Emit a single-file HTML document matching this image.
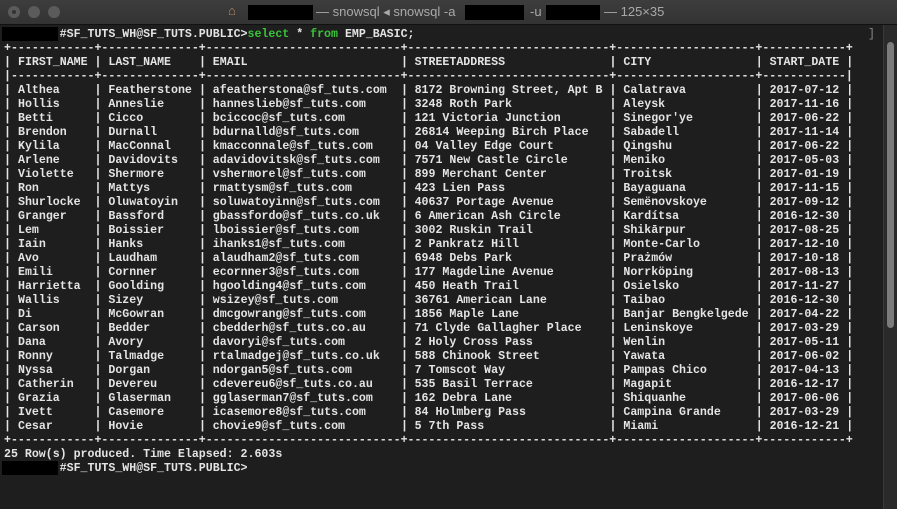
<!DOCTYPE html>
<html><head><meta charset="utf-8"><style>
*{margin:0;padding:0}
body{width:897px;height:509px;background:#1e1e1e;overflow:hidden;position:relative;font-family:"Liberation Mono",monospace}
.tb{position:absolute;left:0;top:0;width:897px;height:24px;background:linear-gradient(#3d3d3d,#333);border-bottom:1px solid #111}
.dot{position:absolute;top:6px;width:12px;height:12px;border-radius:50%;background:#5b5b5b}
.tt{position:absolute;top:4px;font:13px "Liberation Sans",sans-serif;color:#a9a9a9;white-space:pre}
.bx{position:absolute;background:#000}
.t{position:absolute;white-space:pre;font-size:11.6px;line-height:14px;font-weight:bold;color:#e4e4e4}
.g{color:#3ac23a}
.sb{position:absolute;left:883px;top:25px;width:14px;height:484px;background:#2a2a2a;border-left:1px solid #3a3a3a}
.th{position:absolute;left:887px;top:42px;width:7px;height:286px;border-radius:4px;background:#7b7b7b}
</style></head><body>
<div class="tb">
<div class="dot" style="left:8px"></div><div style="position:absolute;left:12px;top:10px;width:4px;height:4px;border-radius:50%;background:#333"></div>
<div class="dot" style="left:28px"></div><div class="dot" style="left:48px"></div>
<div class="tt" style="left:228px;top:3px;color:#b08a60">⌂</div>
<div class="bx" style="left:248px;top:5px;width:65px;height:15px"></div>
<div class="tt" style="left:316px">— snowsql ◂ snowsql -a</div>
<div class="bx" style="left:465px;top:5px;width:59px;height:15px"></div>
<div class="tt" style="left:530px">-u</div>
<div class="bx" style="left:546px;top:5px;width:54px;height:15px"></div>
<div class="tt" style="left:604px">— 125×35</div>
</div>
<div class="sb"></div><div class="th"></div>
<div class="t" style="left:868px;top:28px;color:#888;font-weight:normal">]</div>
<div class="bx" style="left:2px;top:27px;width:56px;height:14px"></div>
<div class="bx" style="left:2px;top:461px;width:56px;height:14px"></div>
<div class="t" style="left:4px;top:28px">        #SF_TUTS_WH@SF_TUTS.PUBLIC&gt;<span class="g">select</span> * <span class="g">from</span> EMP_BASIC;
+------------+--------------+----------------------------+-----------------------------+--------------------+------------+



























+------------+--------------+----------------------------+-----------------------------+--------------------+------------+
25 Row(s) produced. Time Elapsed: 2.603s
        #SF_TUTS_WH@SF_TUTS.PUBLIC&gt;</div>
<div class="t" style="left:4px;top:70px">|------------+--------------+----------------------------+-----------------------------+--------------------+------------|</div>
<div class="t" style="left:4px;top:56px">|
 
|
|
|
|
|
|
|
|
|
|
|
|
|
|
|
|
|
|
|
|
|
|
|
|
|</div>
<div class="t" style="left:94.5px;top:56px">|
 
|
|
|
|
|
|
|
|
|
|
|
|
|
|
|
|
|
|
|
|
|
|
|
|
|</div>
<div class="t" style="left:199px;top:56px">|
 
|
|
|
|
|
|
|
|
|
|
|
|
|
|
|
|
|
|
|
|
|
|
|
|
|</div>
<div class="t" style="left:401px;top:56px">|
 
|
|
|
|
|
|
|
|
|
|
|
|
|
|
|
|
|
|
|
|
|
|
|
|
|</div>
<div class="t" style="left:609.5px;top:56px">|
 
|
|
|
|
|
|
|
|
|
|
|
|
|
|
|
|
|
|
|
|
|
|
|
|
|</div>
<div class="t" style="left:755.7px;top:56px">|
 
|
|
|
|
|
|
|
|
|
|
|
|
|
|
|
|
|
|
|
|
|
|
|
|
|</div>
<div class="t" style="left:846.2px;top:56px">|
 
|
|
|
|
|
|
|
|
|
|
|
|
|
|
|
|
|
|
|
|
|
|
|
|
|</div>
<div class="t" style="left:18px;top:56px">FIRST_NAME
 
Althea
Hollis
Betti
Brendon
Kylila
Arlene
Violette
Ron
Shurlocke
Granger
Lem
Iain
Avo
Emili
Harrietta
Wallis
Di
Carson
Dana
Ronny
Nyssa
Catherin
Grazia
Ivett
Cesar</div>
<div class="t" style="left:108.4px;top:56px">LAST_NAME
 
Featherstone
Anneslie
Cicco
Durnall
MacConnal
Davidovits
Shermore
Mattys
Oluwatoyin
Bassford
Boissier
Hanks
Laudham
Cornner
Goolding
Sizey
McGowran
Bedder
Avory
Talmadge
Dorgan
Devereu
Glaserman
Casemore
Hovie</div>
<div class="t" style="left:212.8px;top:56px">EMAIL
 
afeatherstona@sf_tuts.com
hanneslieb@sf_tuts.com
bciccoc@sf_tuts.com
bdurnalld@sf_tuts.com
kmacconnale@sf_tuts.com
adavidovitsk@sf_tuts.com
vshermorel@sf_tuts.com
rmattysm@sf_tuts.com
soluwatoyinn@sf_tuts.com
gbassfordo@sf_tuts.co.uk
lboissier@sf_tuts.com
ihanks1@sf_tuts.com
alaudham2@sf_tuts.com
ecornner3@sf_tuts.com
hgoolding4@sf_tuts.com
wsizey@sf_tuts.com
dmcgowrang@sf_tuts.com
cbedderh@sf_tuts.co.au
davoryi@sf_tuts.com
rtalmadgej@sf_tuts.co.uk
ndorgan5@sf_tuts.com
cdevereu6@sf_tuts.co.au
gglaserman7@sf_tuts.com
icasemore8@sf_tuts.com
chovie9@sf_tuts.com</div>
<div class="t" style="left:414.6px;top:56px">STREETADDRESS
 
8172 Browning Street, Apt B
3248 Roth Park
121 Victoria Junction
26814 Weeping Birch Place
04 Valley Edge Court
7571 New Castle Circle
899 Merchant Center
423 Lien Pass
40637 Portage Avenue
6 American Ash Circle
3002 Ruskin Trail
2 Pankratz Hill
6948 Debs Park
177 Magdeline Avenue
450 Heath Trail
36761 American Lane
1856 Maple Lane
71 Clyde Gallagher Place
2 Holy Cross Pass
588 Chinook Street
7 Tomscot Way
535 Basil Terrace
162 Debra Lane
84 Holmberg Pass
5 7th Pass</div>
<div class="t" style="left:623.4px;top:56px">CITY
 
Calatrava
Aleysk
Sinegor'ye
Sabadell
Qingshu
Meniko
Troitsk
Bayaguana
Semënovskoye
Kardítsa
Shikārpur
Monte-Carlo
Prażmów
Norrköping
Osielsko
Taibao
Banjar Bengkelgede
Leninskoye
Wenlin
Yawata
Pampas Chico
Magapit
Shiquanhe
Campina Grande
Miami</div>
<div class="t" style="left:769.6px;top:56px">START_DATE
 
2017-07-12
2017-11-16
2017-06-22
2017-11-14
2017-06-22
2017-05-03
2017-01-19
2017-11-15
2017-09-12
2016-12-30
2017-08-25
2017-12-10
2017-10-18
2017-08-13
2017-11-27
2016-12-30
2017-04-22
2017-03-29
2017-05-11
2017-06-02
2017-04-13
2016-12-17
2017-06-06
2017-03-29
2016-12-21</div>
</body></html>
